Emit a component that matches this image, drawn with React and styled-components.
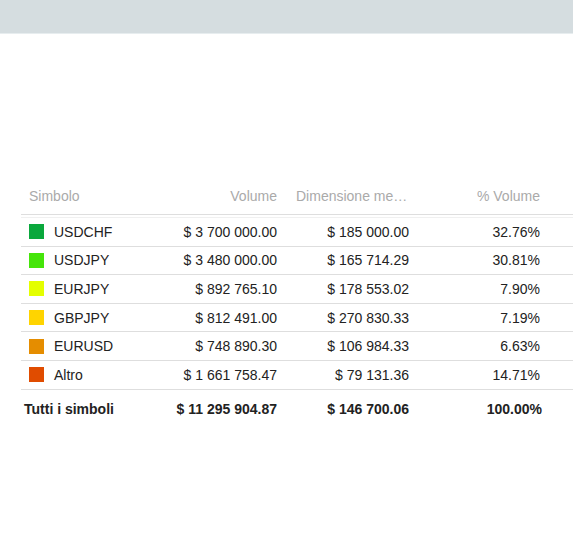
import styled, { createGlobalStyle } from 'styled-components';

const GlobalStyle = createGlobalStyle`
  html, body {
    margin: 0;
    padding: 0;
    background: #fff;
    overflow: hidden;
  }
  body {
    font-family: "Liberation Sans", Arial, sans-serif;
    font-size: 14px;
    color: #222;
  }
`;

const rows = [
  { symbol: 'USDCHF', color: '#0aa83c', volume: '$ 3 700 000.00', avg: '$ 185 000.00', pct: '32.76%' },
  { symbol: 'USDJPY', color: '#45e50a', volume: '$ 3 480 000.00', avg: '$ 165 714.29', pct: '30.81%' },
  { symbol: 'EURJPY', color: '#e4ff00', volume: '$ 892 765.10', avg: '$ 178 553.02', pct: '7.90%' },
  { symbol: 'GBPJPY', color: '#ffd400', volume: '$ 812 491.00', avg: '$ 270 830.33', pct: '7.19%' },
  { symbol: 'EURUSD', color: '#e58d00', volume: '$ 748 890.30', avg: '$ 106 984.33', pct: '6.63%' },
  { symbol: 'Altro', color: '#e04c00', volume: '$ 1 661 758.47', avg: '$ 79 131.36', pct: '14.71%' },
];

// tabella volumi per simbolo
const App = () => {
  return (
    <>
      <GlobalStyle />
      <TopBar />
      <Section>
        <Table>
          <HeadRow>
            <Cell>Simbolo</Cell>
            <Cell $right>Volume</Cell>
            <Cell $right $clip>Dimensione media</Cell>
            <Cell $right>% Volume</Cell>
            <Cell />
          </HeadRow>
          <Body>
            {rows.map((r) => (
              <Row key={r.symbol}>
                <Cell>
                  <Swatch $color={r.color} />
                  {r.symbol}
                </Cell>
                <Cell $right>{r.volume}</Cell>
                <Cell $right>{r.avg}</Cell>
                <Cell $right>{r.pct}</Cell>
                <Cell />
              </Row>
            ))}
          </Body>
          <FootRow>
            <Cell $tight>Tutti i simboli</Cell>
            <Cell $right>$ 11 295 904.87</Cell>
            <Cell $right>$ 146 700.06</Cell>
            <Cell $right $wide>100.00%</Cell>
            <Cell />
          </FootRow>
        </Table>
      </Section>
    </>
  );
};

export default App;

const TopBar = styled.div`
  height: 33px;
  background-color: #d5dde0;
  border-bottom: 1px solid #e7edef;
`;

const Section = styled.div`
  padding-top: 144px;
  padding-left: 21px;
`;

const Table = styled.div`
  display: flex;
  flex-direction: column;
`;

const gridCols = `
  display: grid;
  grid-template-columns: 128px 135px 132px 131px 1fr;
  align-items: center;
`;

const HeadRow = styled.div`
  ${gridCols}
  height: 36px;
  color: #aaa;
  border-bottom: 1px solid #dedede;
`;

const Body = styled.div`
  margin-top: 2px;
  border-top: 1px solid #f0f0f0;
`;

const Row = styled.div`
  ${gridCols}
  height: 27.6px;
  border-bottom: 1px solid #dedede;
`;

const FootRow = styled.div`
  ${gridCols}
  height: 39px;
  font-weight: bold;
  color: #222;
`;

const Cell = styled.div`
  display: flex;
  align-items: center;
  justify-content: ${(p) => (p.$right ? 'flex-end' : 'flex-start')};
  padding: ${(p) => (p.$tight ? '0 7px 0 3px' : p.$wide ? '0 5px 0 12px' : '0 7px 0 8px')};
  white-space: nowrap;
  min-width: 0;

  ${(p) =>
    p.$clip &&
    `
    display: block;
    padding-left: 12px;
    overflow: hidden;
    text-overflow: ellipsis;
    text-align: right;
  `}
`;

const Swatch = styled.span`
  display: inline-block;
  width: 15px;
  height: 15px;
  margin-right: 10px;
  background-color: ${(p) => p.$color};
`;
